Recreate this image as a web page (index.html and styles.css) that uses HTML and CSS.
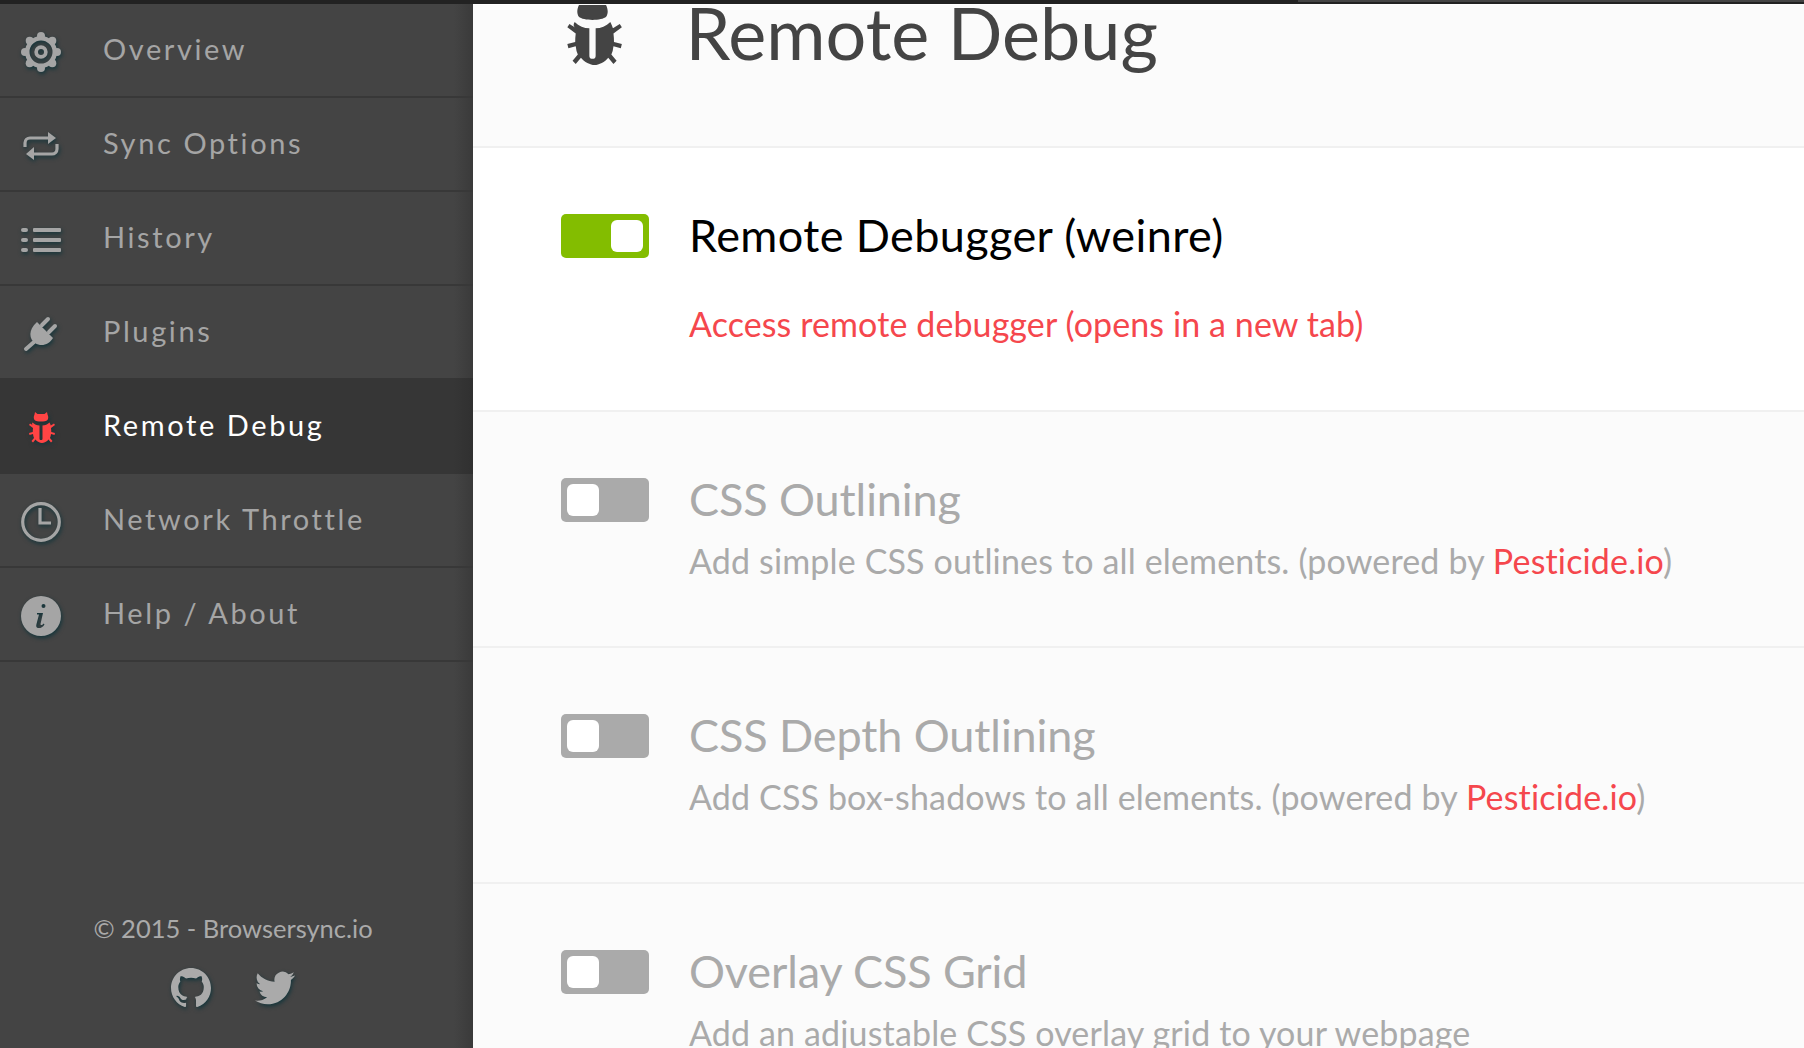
FILE: index.html
```html
<!DOCTYPE html>
<html lang="en">
  <head>
    <meta charset="UTF-8" />
    <title>Browsersync - Remote Debug</title>
    <link rel="stylesheet" href="styles.css">
  </head>
  <body>
    <div class="topbar"><div class="topbar-tab"></div></div>
    <div class="app">
      <aside class="sidebar">
        <nav class="nav">
          <a class="nav-item">
            <svg class="icon" viewBox="0 0 40 40">
              <path fill-rule="evenodd" d="M20 4a16 16 0 1 0 0 32 16 16 0 0 0 0-32zM20 8.500a11.500 11.500 0 1 1 0 23 11.500 11.500 0 0 1 0-23zM20 13.300a6.700 6.700 0 1 0 0 13.400 6.700 6.700 0 0 0 0-13.400zM20 17a3 3 0 1 1 0 6 3 3 0 0 1 0-6z"/>
              <circle cx="20" cy="4" r="4"/><circle cx="31.300" cy="8.700" r="4"/><circle cx="36" cy="20" r="4"/><circle cx="31.300" cy="31.300" r="4"/>
              <circle cx="20" cy="36" r="4"/><circle cx="8.700" cy="31.300" r="4"/><circle cx="4" cy="20" r="4"/><circle cx="8.700" cy="8.700" r="4"/>
            </svg>
            <span>Overview</span>
          </a>
          <a class="nav-item">
            <svg class="icon" viewBox="0 0 40 40"><path class="line" d="M4 21v-4a5 5 0 0 1 5-5h20M36 18v5a5 5 0 0 1-5 5H11"/><path d="M27 6l8 6-8 6zM13 21l-8 7 8 6z"/></svg>
            <span>Sync Options</span>
          </a>
          <a class="nav-item">
            <svg class="icon" viewBox="0 0 40 40"><rect x="0" y="8" width="7" height="4" rx="2"/><rect x="12" y="8" width="28" height="4" rx="1"/><rect x="0" y="18" width="7" height="4" rx="2"/><rect x="12" y="18" width="28" height="4" rx="1"/><rect x="0" y="28" width="7" height="4" rx="2"/><rect x="12" y="28" width="28" height="4" rx="1"/></svg>
            <span>History</span>
          </a>
          <a class="nav-item">
            <svg class="icon" viewBox="0 0 40 40">
              <path d="M16 8L32 24C28 31 20 33 14 29 8 25 7 16 16 8z"/>
              <path class="prong" d="M21 11l6-6M28 18l6-6M13 28l-8 7"/>
            </svg>
            <span>Plugins</span>
          </a>
          <a class="nav-item active">
            <svg class="icon" viewBox="-12 -8 80 80"><use href="#bug"/></svg>
            <span>Remote Debug</span>
          </a>
          <a class="nav-item">
            <svg class="icon" viewBox="0 0 40 40"><circle class="line" cx="20" cy="20" r="18.300"/><path class="line" d="M19 6v15h11"/></svg>
            <span>Network Throttle</span>
          </a>
          <a class="nav-item">
            <svg class="icon" viewBox="0 0 40 40"><path fill-rule="evenodd" d="M20 0a20 20 0 1 0 0 40 20 20 0 0 0 0-40zM22.500 8a2 2 0 1 1 0 4 2 2 0 0 1 0-4zM16 17h6l-2.500 11c0 2 2 1 3-.5l1 1c-2 3-4.500 4-6.500 3.500-2-.5-2-2-1.500-4L18 18.500h-2z"/></svg>
            <span>Help / About</span>
          </a>
        </nav>
        <footer class="side-footer">
          <p>© 2015 - Browsersync.io</p>
          <div class="social">
            <svg class="icon" viewBox="0 0 16 16"><path d="M8 0C3.580 0 0 3.580 0 8c0 3.540 2.290 6.530 5.470 7.590.4.070.55-.17.55-.38v-1.340c-2.230.48-2.700-1.080-2.700-1.080-.36-.92-.89-1.170-.89-1.170-.73-.5.060-.49.060-.49.800.06 1.230.83 1.230.83.710 1.220 1.870.87 2.330.66.070-.52.280-.87.510-1.070-1.780-.2-3.640-.89-3.640-3.950 0-.87.310-1.590.820-2.150-.08-.2-.36-1.020.08-2.120 0 0 .67-.21 2.200.82a7.600 7.600 0 0 1 4 0c1.530-1.040 2.200-.82 2.200-.82.44 1.100.16 1.920.08 2.120.51.560.82 1.270.82 2.150 0 3.070-1.870 3.750-3.650 3.950.29.250.54.730.54 1.480v2.200c0 .21.150.46.55.38A8.010 8.010 0 0 0 16 8c0-4.420-3.580-8-8-8z"/></svg>
            <svg class="icon" viewBox="0 0 24 24"><path d="M23.950 4.570a10 10 0 0 1-2.820.770 4.960 4.960 0 0 0 2.160-2.720c-.95.550-2 .96-3.130 1.190a4.920 4.920 0 0 0-8.380 4.480C7.690 8.090 4.070 6.130 1.640 3.160a4.820 4.820 0 0 0-.67 2.480c0 1.710.87 3.210 2.190 4.100a4.900 4.900 0 0 1-2.230-.62v.060a4.920 4.920 0 0 0 3.950 4.830 5 5 0 0 1-2.210.080 4.940 4.940 0 0 0 4.600 3.420A9.870 9.870 0 0 1 0 19.540a14 14 0 0 0 7.560 2.210c9.050 0 14-7.500 14-13.980 0-.21 0-.42-.02-.63a9.940 9.940 0 0 0 2.460-2.550z"/></svg>
          </div>
        </footer>
      </aside>

      <main class="content">
        <header class="page-head">
          <svg class="head-icon" viewBox="0 0 56 62"><use href="#bug"/></svg>
          <h1>Remote Debug</h1>
        </header>

        <section class="option on">
          <div class="switch"></div>
          <div class="option-body">
            <h2>Remote Debugger (weinre)</h2>
            <p class="access"><a>Access remote debugger (opens in a new tab)</a></p>
          </div>
        </section>

        <section class="option">
          <div class="switch"></div>
          <div class="option-body">
            <h2>CSS Outlining</h2>
            <p>Add simple CSS outlines to all elements. (powered by <a>Pesticide.io</a>)</p>
          </div>
        </section>

        <section class="option">
          <div class="switch"></div>
          <div class="option-body">
            <h2>CSS Depth Outlining</h2>
            <p>Add CSS box-shadows to all elements. (powered by <a>Pesticide.io</a>)</p>
          </div>
        </section>

        <section class="option">
          <div class="switch"></div>
          <div class="option-body">
            <h2>Overlay CSS Grid</h2>
            <p>Add an adjustable CSS overlay grid to your webpage</p>
          </div>
        </section>
      </main>
    </div>

    <svg class="defs" width="0" height="0">
      <defs>
        <g id="bug">
          <path d="M16 0l5 4h14l5-4 1 5c2 4 2 8 0 11-4 4-22 4-26 0-2-3-2-7 0-11z"/>
          <path d="M11 21C15 25 20 27 25 27V53Q25 56 27 56H29Q31 56 31 53V27C36 27 41 25 45 21 46 23 47 25 47.500 27L54 23l2 3-8 6q.5 4 .5 8l7.500 2-1 4-7-2q-.5 5-2 8l5 6-3 3-5-6c-3 4-9 7-13 7s-10-3-13-7l-5 6-3-3 5-6q-1.500-3-2-8l-7 2-1-4 7.500-2q0-4 .5-8l-8-6 2-3 6.500 4C9 25 10 23 11 21z"/>
        </g>
      </defs>
    </svg>
  </body>
</html>
```
FILE: styles.css
```css
html, body {
  height: 100%;
  margin: 0;
  overflow: hidden;
}

body {
  display: flex;
  flex-direction: column;
  font-family: Lato, "Noto Sans", sans-serif;
  background-color: #fff;
}

.topbar {
  height: 4px;
  flex: none;
  background-color: #222;
}

.topbar-tab {
  height: 2px;
  margin-left: 1298px;
  background-color: #444;
}

.app {
  display: flex;
  flex: 1;
  min-height: 0;
}

.defs {
  position: absolute;
}

/* sidebar */
.sidebar {
  width: 473px;
  flex: none;
  display: flex;
  flex-direction: column;
  justify-content: space-between;
  background: linear-gradient(to right, #444 0, #444 454px, #3a3a3a 100%);
}

.nav-item {
  display: flex;
  align-items: center;
  gap: 42px;
  height: 92px;
  padding-left: 21px;
  border-bottom: 2px solid #383838;
  color: #a5a5a5;
  font-size: 29px;
  letter-spacing: 2.600px;
}

.nav-item span {
  margin-bottom: 4px;
}

.nav-item .icon {
  margin-top: 3px;
}

.nav-item.active {
  height: 96px;
  margin-top: -2px;
  border-bottom: 0;
  background: linear-gradient(to right, #363636 0, #363636 454px, #303030 100%);
  color: #fff;
}

.nav-item.active .icon {
  color: #f44;
}

.icon {
  width: 40px;
  height: 40px;
  flex: none;
  overflow: visible;
  fill: currentColor;
  filter: drop-shadow(1px 2px 2px #12343a);
}

.line {
  fill: none;
  stroke: currentColor;
  stroke-width: 3.200px;
}

.prong {
  fill: none;
  stroke: currentColor;
  stroke-width: 4px;
  stroke-linecap: round;
}

.side-footer {
  padding: 0 7px 40px 0;
  color: #aaa;
  text-align: center;
}

.side-footer p {
  margin: 0 0 25px;
  font-size: 25.500px;
}

.social {
  display: flex;
  justify-content: center;
  gap: 44px;
}

/* content */
.content {
  flex: 1;
  min-width: 0;
  overflow: hidden;
}

.page-head {
  display: flex;
  gap: 63.500px;
  height: 141px;
  padding-left: 90px;
  overflow: hidden;
  border-top: 1px solid #fff;
  border-bottom: 2px solid #f0f0f0;
  background-color: #fbfbfb;
  color: #444;
}

.head-icon {
  width: 59px;
  height: 65px;
  flex: none;
  margin-top: -5px;
  fill: #444;
}

.page-head h1 {
  margin: -13px 0 0;
  font-size: 72px;
  font-weight: 400;
  line-height: 80px;
}

.option {
  display: flex;
  gap: 40px;
  height: 168px;
  padding: 66px 0 0 88px;
  border-bottom: 2px solid #f0f0f0;
  background-color: #fbfbfb;
  color: #aaa;
}

.option.on {
  height: 196px;
  background-color: #fff;
  color: #000;
}

.switch {
  display: flex;
  width: 88px;
  height: 44px;
  flex: none;
  box-sizing: border-box;
  padding: 6px;
  border-radius: 5px;
  background-color: #aaa;
}

.switch::before {
  content: "";
  width: 32px;
  border-radius: 6px;
  background-color: #fff;
}

.on .switch {
  justify-content: flex-end;
  background-color: #83bd00;
}

.option h2 {
  margin: -1px 0 2px;
  font-size: 45px;
  font-weight: 400;
  letter-spacing: -.100px;
  line-height: 44px;
}

.on h2 {
  letter-spacing: .400px;
}

.option p {
  margin: 18px 0 0;
  font-size: 34px;
  letter-spacing: .150px;
  line-height: 44px;
}

.option p.access {
  margin-top: 45px;
  letter-spacing: .100px;
}

.option a {
  color: #f5474d;
}
```
